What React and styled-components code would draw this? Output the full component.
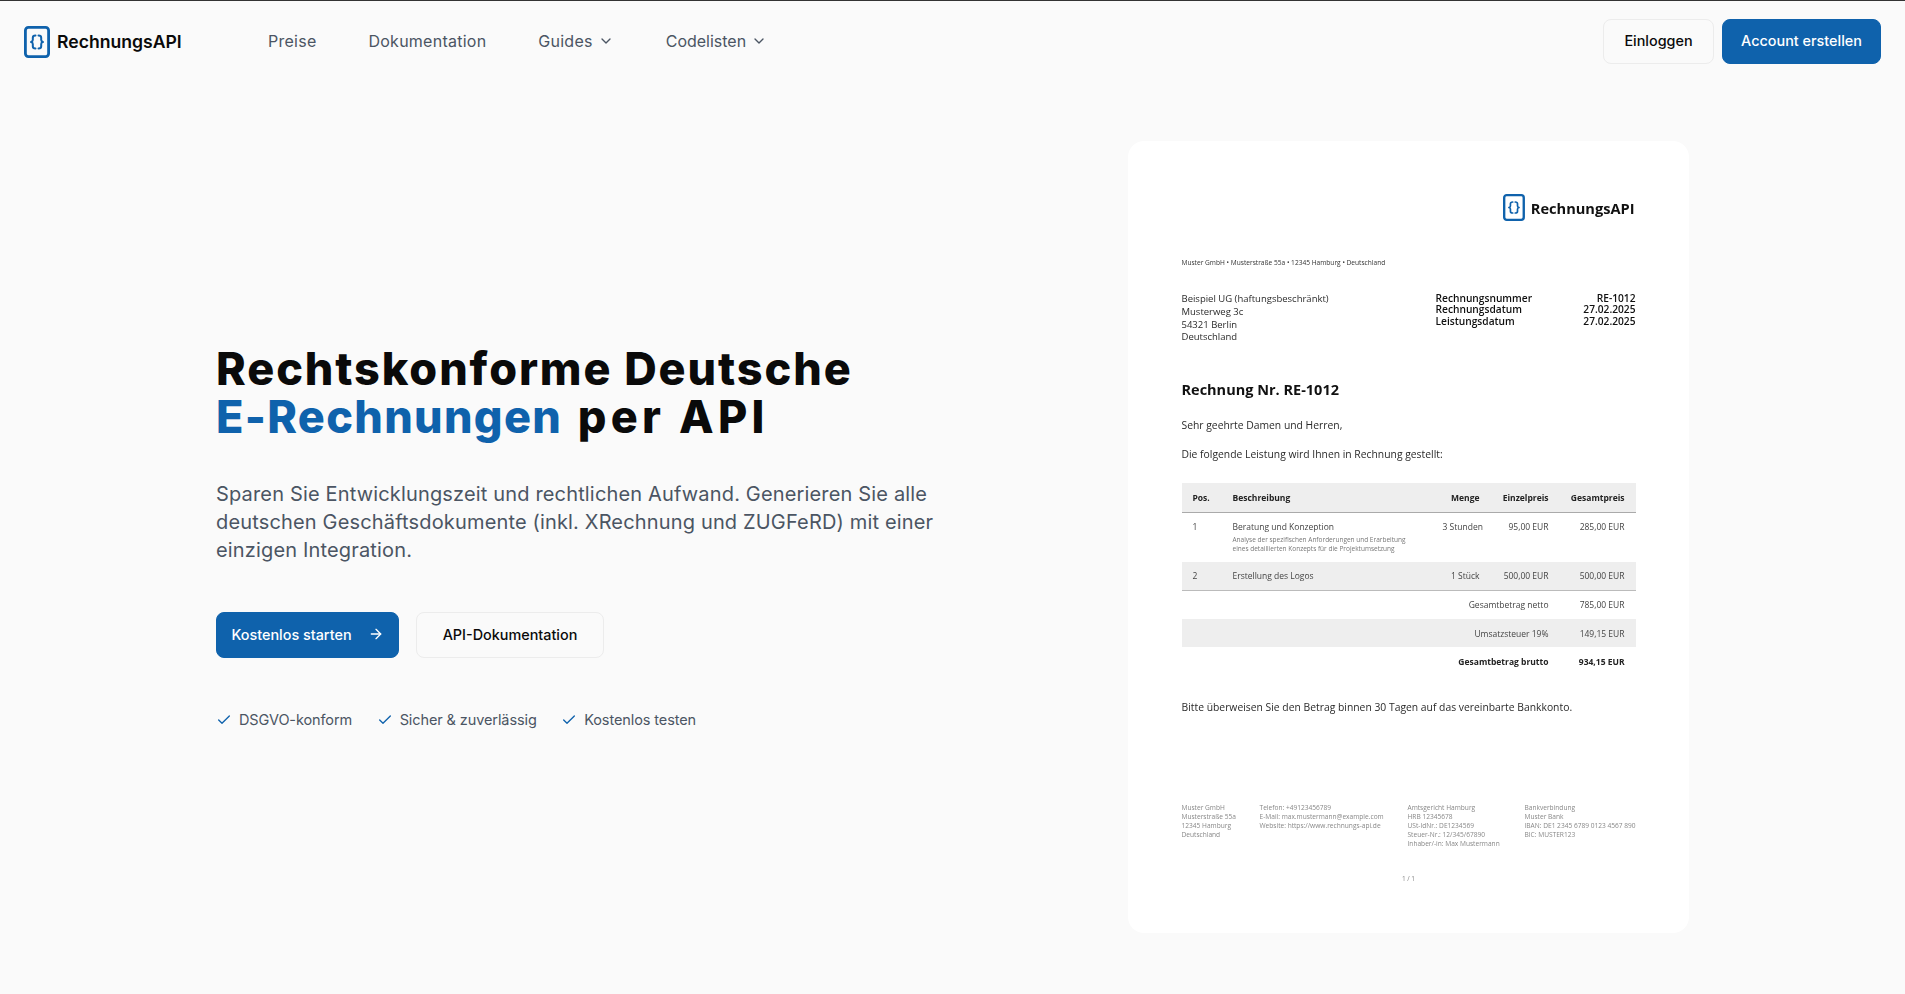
import React from 'react';
import styled, { createGlobalStyle } from 'styled-components';
import { ChevronDown, ArrowRight, Check } from 'lucide-react';

const GlobalStyle = createGlobalStyle`
  html, body {
    margin: 0;
    padding: 0;
    background: #fafafa;
  }
  * {
    box-sizing: border-box;
  }
`;

const BLUE = '#0f62ac';

const Page = styled.div`
  height: 994px;
  overflow: hidden;
  background: #fafafa;
  border-top: 1px solid #333;
  font-family: Inter, "Noto Sans", sans-serif;
`;

const Nav = styled.header`
  display: flex;
  align-items: center;
  height: 81px;
  padding: 0 24px;
`;

const Brand = styled.div`
  display: flex;
  align-items: center;
  gap: 7px;
  width: 244px;
  font-size: 17.6px;
  font-weight: 600;
  color: #0a0a0a;
`;

const NavLinks = styled.nav`
  display: flex;
  align-items: center;
  gap: 52px;
  flex: 1;
`;

const NavLink = styled.a`
  display: flex;
  align-items: center;
  gap: 5px;
  padding-bottom: 2px;
  font-size: 16px;
  letter-spacing: ${(p) => p.$spacing ?? 0.25}px;
  color: #4b5563;
`;

const NavActions = styled.div`
  display: flex;
  gap: 8px;
`;

const Button = styled.a`
  display: flex;
  align-items: center;
  justify-content: center;
  gap: 16px;
  height: ${(p) => (p.$large ? 46 : 45)}px;
  width: ${(p) => p.$width}px;
  padding-bottom: 2px;
  border-radius: 8px;
  font-size: 14.4px;
  font-weight: 500;
  color: ${(p) => (p.$primary ? '#fff' : '#0a0a0a')};
  background: ${(p) => (p.$primary ? BLUE : '#fafafa')};
  border: 1px solid ${(p) => (p.$primary ? BLUE : '#ececec')};
`;

const Hero = styled.main`
  display: flex;
  justify-content: space-between;
  align-items: center;
  max-width: 1536px;
  margin: 0 auto;
  padding: 59px 32px 0 31.5px;
`;

const HeroText = styled.div`
  width: 760px;
  margin-top: 3px;
`;

const Title = styled.h1`
  margin: 0 0 39.5px;
  font-size: 45px;
  line-height: 48px;
  font-weight: 800;
  letter-spacing: 1.9px;
  color: #0a0a0a;
`;

const Accent = styled.span`
  display: inline-block;
  letter-spacing: 1.3px;
  color: ${BLUE};
`;

const TitleEnd = styled.span`
  display: inline-block;
  margin-left: 4px;
  letter-spacing: 4.2px;
`;

const Lead = styled.p`
  margin: 0 0 48px;
  font-size: 20px;
  line-height: 28px;
  letter-spacing: 0.16px;
  color: #4b5563;
`;

const ButtonRow = styled.div`
  display: flex;
  gap: 17px;
  margin-bottom: 50px;
`;

const Perks = styled.ul`
  display: flex;
  gap: 24.5px;
  margin: 0;
  padding: 0;
  list-style: none;
`;

const Perk = styled.li`
  display: flex;
  align-items: center;
  gap: 7px;
  font-size: 14.5px;
  line-height: 24px;
  letter-spacing: -0.1px;
  color: #4b5563;
`;

const Sheet = styled.section`
  width: 561px;
  height: 792px;
  padding: 53px 53px 0 54px;
  background: #fff;
  border-radius: 16px;
  filter: blur(0.25px);
  font-family: "Open Sans", "Noto Sans", sans-serif;
  font-size: 10px;
  color: #222;
`;

const SheetBrand = styled.div`
  display: flex;
  justify-content: flex-end;
  align-items: center;
  gap: 6px;
  height: 27px;
  padding-right: 1px;
  font-size: 14.6px;
  font-weight: 700;
  color: #111;
`;

const SenderLine = styled.div`
  margin-top: 37px;
  font-size: 6.6px;
  line-height: 10px;
  color: #333;
`;

const AddressRow = styled.div`
  display: flex;
  justify-content: space-between;
  margin-top: 25px;
  font-size: 9.5px;
`;

const Address = styled.div`
  line-height: 12.8px;
  color: #2a2a2a;
`;

const Meta = styled.div`
  width: 200px;
  font-size: 10.2px;
  line-height: 11.3px;
  color: #111;
  font-weight: 600;
`;

const MetaRow = styled.div`
  display: flex;
  justify-content: space-between;
`;

const DocTitle = styled.h2`
  margin: 36px 0 0;
  font-size: 14.5px;
  line-height: 20px;
  font-weight: 700;
  color: #111;
`;

const DocText = styled.p`
  margin: ${(p) => p.$top}px 0 0;
  font-size: 10.35px;
  line-height: 14px;
  color: #2a2a2a;
`;

const Table = styled.table`
  width: 454px;
  margin-top: 22px;
  border-collapse: collapse;
  table-layout: fixed;
  font-size: 8.5px;
  color: #444;
`;

const HeadRow = styled.tr`
  height: 29px;
  background: #eee;
  border-bottom: 1px solid #aaa;
  color: #222;
`;

const Row = styled.tr`
  height: ${(p) => p.$height}px;
  background: ${(p) => (p.$shaded ? '#eee' : 'transparent')};
  border-bottom: ${(p) => (p.$line ? '1px solid #bbb' : 'none')};
  font-weight: ${(p) => (p.$bold ? 700 : 400)};
  color: ${(p) => (p.$bold ? '#222' : '#444')};
`;

const Cell = styled.td`
  padding: ${(p) => (p.$top ? '8px 11px 0' : '0 11px')};
  vertical-align: ${(p) => (p.$top ? 'top' : 'middle')};
  text-align: ${(p) => (p.$right ? 'right' : 'left')};
  white-space: nowrap;
`;

const HeadCell = styled.th`
  padding: 0 11px;
  text-align: ${(p) => (p.$right ? 'right' : 'left')};
  font-weight: 700;
  white-space: nowrap;
`;

const ItemNote = styled.div`
  margin-top: 3px;
  font-size: 6.5px;
  line-height: 9.5px;
  color: #777;
`;

const SheetFooter = styled.div`
  display: grid;
  grid-template-columns: 78px 148px 117px auto;
  margin-top: 89px;
  font-size: 6.6px;
  line-height: 9px;
  white-space: nowrap;
  color: #888;
`;

const PageNumber = styled.div`
  margin-top: 26px;
  text-align: center;
  font-size: 6.5px;
  line-height: 10px;
  color: #888;
`;

const Logo = ({ height }) => (
  <svg width={(height * 26) / 32} height={height} viewBox="0 0 26 32" fill="none">
    <rect x="1.4" y="1.4" width="23.2" height="29.2" rx="3" stroke={BLUE} strokeWidth="2.8" />
    <path
      d="M11.5 9.5c-1.8 0-2.7.8-2.7 2.2v2.4c0 1-.6 1.6-1.8 1.9 1.2.3 1.8.9 1.8 1.9v2.4c0 1.4.9 2.2 2.7 2.2M14.5 9.5c1.8 0 2.7.8 2.7 2.2v2.4c0 1 .6 1.6 1.8 1.9-1.2.3-1.8.9-1.8 1.9v2.4c0 1.4-.9 2.2-2.7 2.2"
      stroke={BLUE}
      strokeWidth="2"
      strokeLinecap="round"
      strokeLinejoin="round"
    />
  </svg>
);

const footerColumns = [
  ['Muster GmbH', 'Musterstraße 55a', '12345 Hamburg', 'Deutschland'],
  ['Telefon: +49123456789', 'E-Mail: max.mustermann@example.com', 'Website: https://www.rechnungs-api.de'],
  ['Amtsgericht Hamburg', 'HRB 12345678', 'USt-IdNr.: DE1234569', 'Steuer-Nr.: 12/345/67890', 'Inhaber/-in: Max Mustermann'],
  ['Bankverbindung', 'Muster Bank', 'IBAN: DE1 2345 6789 0123 4567 890', 'BIC: MUSTER123'],
];

const App = () => (
  <Page>
    <GlobalStyle />
    <Nav>
      <Brand>
        <Logo height={32} />
        RechnungsAPI
      </Brand>
      <NavLinks>
        <NavLink>Preise</NavLink>
        <NavLink>Dokumentation</NavLink>
        <NavLink>
          Guides <ChevronDown size={16} />
        </NavLink>
        <NavLink $spacing={0}>
          Codelisten <ChevronDown size={16} />
        </NavLink>
      </NavLinks>
      <NavActions>
        <Button $width={111}>Einloggen</Button>
        <Button $primary $width={159}>Account erstellen</Button>
      </NavActions>
    </Nav>

    <Hero>
      <HeroText>
        <Title>
          Rechtskonforme Deutsche
          <br />
          <Accent>E-Rechnungen</Accent> <TitleEnd>per API</TitleEnd>
        </Title>
        <Lead>
          Sparen Sie Entwicklungszeit und rechtlichen Aufwand. Generieren Sie alle
          <br />
          deutschen Geschäftsdokumente (inkl. XRechnung und ZUGFeRD) mit einer
          <br />
          einzigen Integration.
        </Lead>
        <ButtonRow>
          <Button $primary $large $width={183}>
            Kostenlos starten <ArrowRight size={16} />
          </Button>
          <Button $large $width={188}>API-Dokumentation</Button>
        </ButtonRow>
        <Perks>
          {['DSGVO-konform', 'Sicher & zuverlässig', 'Kostenlos testen'].map((perk) => (
            <Perk key={perk}>
              <Check size={16} color={BLUE} />
              {perk}
            </Perk>
          ))}
        </Perks>
      </HeroText>

      <Sheet>
        <SheetBrand>
          <Logo height={27} />
          RechnungsAPI
        </SheetBrand>
        <SenderLine>Muster GmbH • Musterstraße 55a • 12345 Hamburg • Deutschland</SenderLine>
        <AddressRow>
          <Address>
            Beispiel UG (haftungsbeschränkt)
            <br />
            Musterweg 3c
            <br />
            54321 Berlin
            <br />
            Deutschland
          </Address>
          <Meta>
            <MetaRow><span>Rechnungsnummer</span><span>RE-1012</span></MetaRow>
            <MetaRow><span>Rechnungsdatum</span><span>27.02.2025</span></MetaRow>
            <MetaRow><span>Leistungsdatum</span><span>27.02.2025</span></MetaRow>
          </Meta>
        </AddressRow>
        <DocTitle>Rechnung Nr. RE-1012</DocTitle>
        <DocText $top={18}>Sehr geehrte Damen und Herren,</DocText>
        <DocText $top={15}>Die folgende Leistung wird Ihnen in Rechnung gestellt:</DocText>
        <Table>
          <colgroup>
            <col width="40" />
            <col width="210" />
            <col width="59" />
            <col width="69" />
            <col width="76" />
          </colgroup>
          <thead>
            <HeadRow>
              <HeadCell>Pos.</HeadCell>
              <HeadCell>Beschreibung</HeadCell>
              <HeadCell $right>Menge</HeadCell>
              <HeadCell $right>Einzelpreis</HeadCell>
              <HeadCell $right>Gesamtpreis</HeadCell>
            </HeadRow>
          </thead>
          <tbody>
            <Row $height={50}>
              <Cell $top>1</Cell>
              <Cell $top>
                Beratung und Konzeption
                <ItemNote>
                  Analyse der spezifischen Anforderungen und Erarbeitung
                  <br />
                  eines detaillierten Konzepts für die Projektumsetzung
                </ItemNote>
              </Cell>
              <Cell $top $right>3 Stunden</Cell>
              <Cell $top $right>95,00 EUR</Cell>
              <Cell $top $right>285,00 EUR</Cell>
            </Row>
            <Row $height={28} $shaded $line>
              <Cell>2</Cell>
              <Cell>Erstellung des Logos</Cell>
              <Cell $right>1 Stück</Cell>
              <Cell $right>500,00 EUR</Cell>
              <Cell $right>500,00 EUR</Cell>
            </Row>
            <Row $height={29}>
              <Cell colSpan={4} $right>Gesamtbetrag netto</Cell>
              <Cell $right>785,00 EUR</Cell>
            </Row>
            <Row $height={28} $shaded>
              <Cell colSpan={4} $right>Umsatzsteuer 19%</Cell>
              <Cell $right>149,15 EUR</Cell>
            </Row>
            <Row $height={29} $bold>
              <Cell colSpan={4} $right>Gesamtbetrag brutto</Cell>
              <Cell $right>934,15 EUR</Cell>
            </Row>
          </tbody>
        </Table>
        <DocText $top={24}>Bitte überweisen Sie den Betrag binnen 30 Tagen auf das vereinbarte Bankkonto.</DocText>
        <SheetFooter>
          {footerColumns.map((lines) => (
            <div key={lines[0]}>
              {lines.map((line) => (
                <div key={line}>{line}</div>
              ))}
            </div>
          ))}
        </SheetFooter>
        <PageNumber>1 / 1</PageNumber>
      </Sheet>
    </Hero>
  </Page>
);

export default App;
